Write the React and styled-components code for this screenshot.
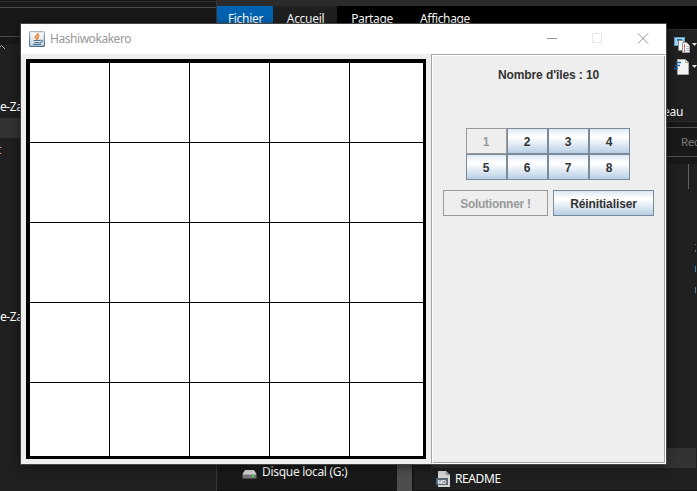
import React from "react";
import styled, { createGlobalStyle } from "styled-components";

const Global = createGlobalStyle`
  * { box-sizing: border-box; }
  html, body { margin: 0; overflow: hidden; background: #202020; }
`;

const Desktop = styled.div`
  position: relative;
  display: flex;
  width: 697px;
  height: 491px;
  overflow: hidden;
  background: #202020;
  color: #fff;
  font: 12px/16px "Noto Sans", "Open Sans", sans-serif;
  white-space: nowrap;
`;

const Label = styled.span`
  display: inline-block;
  font-size: ${(p) => p.$size || 12}px;
  letter-spacing: ${(p) => p.$track || 0}px;
  color: ${(p) => p.$color || "inherit"};
`;

/* Folder window at the back */
const TreeWindow = styled.div`
  flex: 0 0 217px;
  display: flex;
  flex-direction: column;
  border-right: 1px solid #353535;
  overflow: hidden;
`;
const TreeBar = styled.div`
  flex: 0 0 ${(p) => p.$h}px;
  background: #191919;
  border-bottom: 1px solid ${(p) => p.$line};
`;
const TreeScroll = styled.div`
  flex: 0 0 60px;
  padding-top: 7px;
  background: linear-gradient(#191919 7px, #202020 7px);
  svg { display: block; }
`;
const TreeRow = styled.div`
  flex: 0 0 ${(p) => p.$h || 20}px;
  line-height: 20px;
  background: ${(p) => (p.$selected ? "#333" : "transparent")};
`;
const ClippedLabel = styled(Label)`
  margin-left: -3px;
  padding-top: 2px;
`;

/* Explorer window */
const Explorer = styled.div`
  flex: 0 0 480px;
  min-width: 0;
  width: 480px;
  display: flex;
  flex-direction: column;
  overflow: hidden;
`;
const Caption = styled.div`
  flex: 0 0 6px;
  background: #2b2b2b;
`;
const Tabs = styled.div`
  flex: 0 0 23px;
  display: flex;
  background: #000;
`;
const Tab = styled.div`
  width: ${(p) => p.$w}px;
  padding: 5px 0 0 1px;
  text-align: center;
  background: ${(p) => p.$bg || "transparent"};
`;
const Ribbon = styled.div`
  flex: 0 0 93px;
  display: flex;
  flex-direction: column;
  align-items: flex-end;
  background: #202020;
  border-top: 1px solid #2b2b2b;
  border-bottom: 1px solid #2b2b2b;
  padding-top: 7px;
`;
const Tool = styled.div`
  height: 22px;
  width: 23px;
  svg { display: block; }
`;
const GroupName = styled.div`
  width: 34px;
  margin-top: 23px;
`;
const AddressBar = styled.div`
  flex: 0 0 42px;
  padding: 5px 0 7px;
  background: #191919;
`;
const SearchField = styled.div`
  height: 30px;
  padding: 6px 0 0 464px;
  border: solid #535353;
  border-width: 1px 0;
`;
const Panes = styled.div`
  flex: 1;
  display: flex;
  min-height: 0;
`;
const NavPane = styled.div`
  flex: 0 0 180px;
  display: flex;
  align-items: flex-end;
  gap: 5px;
  padding: 0 0 10px 25px;
  background: #191919;
  border-bottom: 1px solid #101010;
  svg { margin-bottom: 1px; }
`;
const Scrollbar = styled.div`
  flex: 0 0 15px;
  background: #4d4d4d;
`;
const FileList = styled.div`
  flex: 1;
  display: flex;
  flex-direction: column;
  border-left: 2px solid #151515;
  border-bottom: 1px solid #111;
`;
const ColumnHeader = styled.div`
  height: 25px;
  width: 275px;
  border-right: 1px solid #636363;
`;
const ClippedNames = styled.div`
  flex: 1;
  display: flex;
  justify-content: flex-end;
`;
const SelectedFile = styled.div`
  flex: 0 0 20px;
  margin: 0 1px 0 17px;
  padding: 16px 0 0 5px;
  background: #333;
  svg { display: block; }
`;
const FileRow = styled.div`
  flex: 0 0 22px;
  display: flex;
  align-items: center;
  gap: 4px;
  padding-left: 22px;
`;

/* Application window */
const AppWindow = styled.div`
  position: absolute;
  left: 20px;
  top: 23px;
  width: 647px;
  height: 442px;
  display: flex;
  flex-direction: column;
  border: 1px solid #454545;
  background: #eee;
  box-shadow: 0 2px 10px rgba(0, 0, 0, 0.5);
`;
const TitleBar = styled.div`
  flex: 0 0 30px;
  display: flex;
  align-items: center;
  padding-left: 8px;
  background: #fff;
  svg { display: block; }
`;
const Title = styled.div`
  flex: 1;
  padding-left: 5px;
  color: #999;
`;
const Client = styled.div`
  flex: 1;
  display: flex;
  gap: 5px;
  padding-left: 5px;
`;
const Board = styled.div`
  width: 400px;
  height: 400px;
  margin-top: 5px;
  display: grid;
  grid-template: repeat(4, 79px) 73px / repeat(4, 79px) 73px;
  gap: 1px;
  border: solid #000;
  border-width: 4px 3px 3px 4px;
  background: #000;
`;
const Cell = styled.div`
  background: #fff;
`;
const Controls = styled.div`
  width: 235px;
  display: flex;
  flex-direction: column;
  align-items: center;
  border: 1px solid #a3a3a3;
  border-right-color: #fff;
  border-bottom-color: #fff;
  box-shadow: inset 1px 1px #fff, inset -1px -1px #a3a3a3;
  color: #333;
  font: bold 12px/14px "Liberation Sans", Arial, sans-serif;
`;
const IslandCount = styled.div`
  margin-top: 13px;
  letter-spacing: -0.1px;
`;
const Keypad = styled.div`
  display: grid;
  grid-template: repeat(2, 26px) / repeat(4, 41px);
  margin: 46px 2px 0 0;
`;
const SwingButton = styled.button`
  width: ${(p) => p.$w || 41}px;
  height: 26px;
  padding: 1px 0 0;
  border: 1px solid #7a8a99;
  border-radius: 0;
  background: linear-gradient(#dde8f3 0%, #fff 30%, #fff 36%, #b8cfe5 100%);
  color: #333;
  font: inherit;
  letter-spacing: ${(p) => p.$track || 0}px;
  &:disabled {
    border-color: #999;
    background: #eee;
    color: #999;
  }
`;
const Actions = styled.div`
  display: flex;
  gap: 5px;
  margin-top: 10px;
`;

const JavaIcon = () => (
  <svg width="16" height="16" viewBox="0 0 16 16">
    <defs>
      <linearGradient id="tile" x2="0" y2="1">
        <stop stopColor="#fff" />
        <stop offset="1" stopColor="#cbd6df" />
      </linearGradient>
      <linearGradient id="rim" x2="0" y2="1">
        <stop stopColor="#a9b6c2" />
        <stop offset="1" stopColor="#48708f" />
      </linearGradient>
    </defs>
    <rect x=".6" y=".6" width="14.8" height="14.8" rx="1" fill="url(#tile)" stroke="url(#rim)" strokeWidth="1.2" />
    <path d="M9 2c.8 1.700-3.200 2.500-2.500 4.500.3.800 1.500 1.200 1.100 2.300M10.500 4.300C7.500 5.200 9.900 6.400 8.500 8.400" fill="none" stroke="#ea7b24" strokeWidth="1.400" />
    <path d="M4.500 9.500h6.500M5.500 11.500h5M4 13.400h8M11.300 9.300c3-.5 2.300 2-.3 2.300" fill="none" stroke="#4b7898" strokeWidth="1.100" />
  </svg>
);

const CaptionButtons = () => (
  <svg width="138" height="30" viewBox="0 0 138 30" fill="none" shapeRendering="crispEdges">
    <path d="M19 14.500h10" stroke="#999" />
    <rect x="64.500" y="9.500" width="9" height="9" stroke="#e7e7e7" />
    <path d="M110 9.500l10 10M120 9.500l-10 10" stroke="#8e8e8e" shapeRendering="auto" />
  </svg>
);

const PropertiesIcon = () => (
  <svg width="23" height="18" viewBox="0 0 23 18">
    <rect x=".5" y=".5" width="10" height="8" fill="#a8d4ee" stroke="#5aa4d0" />
    <path d="M3 3h5" stroke="#286f9c" strokeWidth="2" />
    <path d="M4.500 3.500h4l2 2v8h-6z" fill="#f4f4f4" stroke="#888" />
    <path d="M8.500 5.500h4l3 3v7h-7z" fill="#fff" stroke="#999" />
    <path d="M10.500 7v8" stroke="#e06464" />
    <path d="M12 9.500h3M12 11.500h3M12 13.500h3" stroke="#a9bdd6" />
    <path d="M18 6h5l-2.500 3z" fill="#ddd" />
  </svg>
);

const OpenIcon = () => (
  <svg width="23" height="18" viewBox="0 0 23 18">
    <path d="M3.500 .5h8l3 3v12h-11z" fill="#f5f5f5" stroke="#aaa" />
    <path d="M11.500 .5v3h3" fill="none" stroke="#aaa" />
    <path d="M2 3.500h5M1 6.500h5M0 9.500h4" stroke="#1769b5" strokeWidth="1.500" />
    <path d="M18 6h5l-2.500 3z" fill="#ddd" />
  </svg>
);

const DriveIcon = () => (
  <svg width="15" height="9" viewBox="0 0 15 9">
    <path d="M3 0h9l2.500 4H.5z" fill="#d8d8d8" />
    <path d="M.5 4h14v4.500H.5z" fill="#777" />
    <path d="M1 4.500h13" stroke="#aaa" />
    <rect x="10" y="5" width="2" height="2" fill="#25e839" />
  </svg>
);

const MarkdownIcon = () => (
  <svg width="15" height="16" viewBox="0 0 15 16">
    <path d="M2 0h8l4 4v12H2z" fill="#d5d7d9" />
    <path d="M10 0v4h4z" fill="#999" />
    <rect y="7" width="12" height="7" fill="#596873" />
    <text x="6" y="12.700" textAnchor="middle" fontSize="5.500" fontWeight="bold" fontFamily="Liberation Sans, sans-serif" fill="#fff">MD</text>
  </svg>
);

const FileIconEdge = () => (
  <svg width="14" height="1" viewBox="0 0 14 1">
    <path d="M0 .5h14" stroke="#245b80" />
  </svg>
);

const NameEdges = () => (
  <svg width="3" height="259" viewBox="0 0 3 259" shapeRendering="crispEdges">
    <path d="M1 55h1v1h-1zM1 61h1v2h-1zM1 77h1v6h-1zM1 98h1v6h-1z" fill="#427fad" />
  </svg>
);

const digits = [1, 2, 3, 4, 5, 6, 7, 8];

export default function App() {
  return (
    <Desktop>
      <Global />
      <TreeWindow>
        <TreeBar $h={2} $line="#303030" />
        <TreeBar $h={6} $line="#4a4a4a" />
        <TreeBar $h={29} $line="#4a4a4a" />
        <TreeScroll>
          <svg width="6" height="6" viewBox="0 0 6 6">
            <path d="M-2 5L1.500 1.500L5 5" fill="none" stroke="#aaa" />
          </svg>
        </TreeScroll>
        <TreeRow $h={21}><Label $track={-0.4}>e-Za</Label></TreeRow>
        <TreeRow $selected />
        <TreeRow $h={169}><ClippedLabel $color="#e8b37c">t</ClippedLabel></TreeRow>
        <TreeRow><Label $track={-0.4}>e-Za</Label></TreeRow>
      </TreeWindow>
      <Explorer>
        <Caption />
        <Tabs>
          <Tab $w={56} $bg="#0063b1"><Label $track={-0.3}>Fichier</Label></Tab>
          <Tab $w={64} $bg="#202020"><Label $track={-0.3}>Accueil</Label></Tab>
          <Tab $w={69}><Label $track={-0.35}>Partage</Label></Tab>
          <Tab $w={77}><Label $track={-0.35}>Affichage</Label></Tab>
        </Tabs>
        <Ribbon>
          <Tool><PropertiesIcon /></Tool>
          <Tool><OpenIcon /></Tool>
          <GroupName><Label $track={-0.2}>eau</Label></GroupName>
        </Ribbon>
        <AddressBar>
          <SearchField><Label $size={11.5} $track={-0.4} $color="#777">Rec</Label></SearchField>
        </AddressBar>
        <Panes>
          <NavPane>
            <DriveIcon />
            <Label $track={-0.3}>Disque local (G:)</Label>
          </NavPane>
          <Scrollbar />
          <FileList>
            <ColumnHeader />
            <ClippedNames><NameEdges /></ClippedNames>
            <SelectedFile><FileIconEdge /></SelectedFile>
            <FileRow>
              <MarkdownIcon />
              <Label $track={-0.4}>README</Label>
            </FileRow>
          </FileList>
        </Panes>
      </Explorer>
      <AppWindow>
        <TitleBar>
          <JavaIcon />
          <Title><Label $track={-0.45}>Hashiwokakero</Label></Title>
          <CaptionButtons />
        </TitleBar>
        <Client>
          <Board>
            {Array.from({ length: 25 }, (_, i) => <Cell key={i} />)}
          </Board>
          <Controls>
            <IslandCount>Nombre d'îles : 10</IslandCount>
            <Keypad>
              {digits.map((d) => (
                <SwingButton key={d} disabled={d === 1}>{d}</SwingButton>
              ))}
            </Keypad>
            <Actions>
              <SwingButton $w={105} $track={-0.25} disabled>Solutionner !</SwingButton>
              <SwingButton $w={101} $track={-0.1}>Réinitialiser</SwingButton>
            </Actions>
          </Controls>
        </Client>
      </AppWindow>
    </Desktop>
  );
}
